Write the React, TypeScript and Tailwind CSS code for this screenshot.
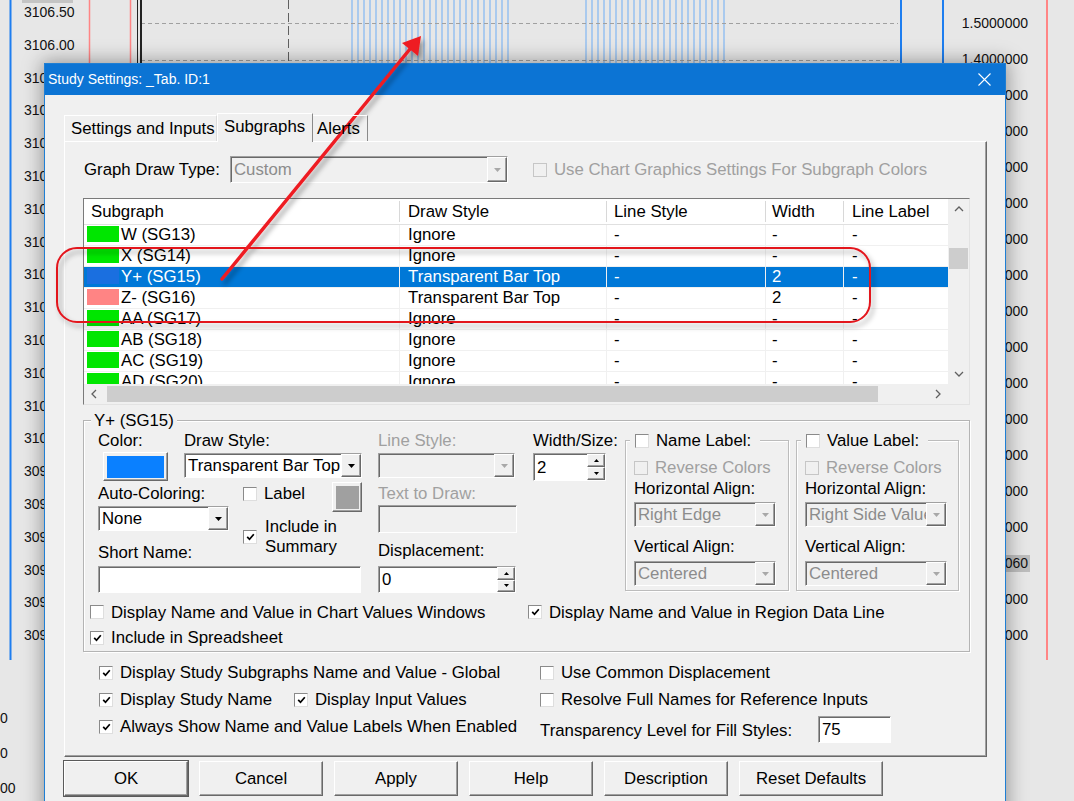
import React from 'react';

type Row = { name: string; swatch: string; style: string; width: string; selected?: boolean };

const ROWS: Row[] = [
  { name: 'W (SG13)', swatch: 'bg-[#00e600]', style: 'Ignore', width: '-' },
  { name: 'X (SG14)', swatch: 'bg-[#00e600]', style: 'Ignore', width: '-' },
  { name: 'Y+ (SG15)', swatch: 'bg-[#1a6fe0]', style: 'Transparent Bar Top', width: '2', selected: true },
  { name: 'Z- (SG16)', swatch: 'bg-[#ff8484]', style: 'Transparent Bar Top', width: '2' },
  { name: 'AA (SG17)', swatch: 'bg-[#00e600]', style: 'Ignore', width: '-' },
  { name: 'AB (SG18)', swatch: 'bg-[#00e600]', style: 'Ignore', width: '-' },
  { name: 'AC (SG19)', swatch: 'bg-[#00e600]', style: 'Ignore', width: '-' },
  { name: 'AD (SG20)', swatch: 'bg-[#00e600]', style: 'Ignore', width: '-' },
];

// classic 3d edges
const raised = 'border border-t-white border-l-white border-r-[#696969] border-b-[#696969] shadow-[inset_-1px_-1px_0_#a0a0a0]';
const sunken = 'border border-t-[#a0a0a0] border-l-[#a0a0a0] border-r-white border-b-white shadow-[inset_1px_1px_0_#696969]';

function Tri({ color = '#000', up = false, w = 7, h = 4 }: { color?: string; up?: boolean; w?: number; h?: number }) {
  return (
    <svg width={w} height={h} viewBox={`0 0 ${w} ${h}`}>
      <polygon points={up ? `0,${h} ${w},${h} ${w / 2},0` : `0,0 ${w},0 ${w / 2},${h}`} fill={color} />
    </svg>
  );
}

function Chevron({ dir }: { dir: 'up' | 'down' | 'left' | 'right' }) {
  const d = {
    up: 'M1 6 L5 2 L9 6',
    down: 'M1 3 L5 7 L9 3',
    left: 'M6 1 L2 5 L6 9',
    right: 'M3 1 L7 5 L3 9',
  }[dir];
  return (
    <svg width="10" height="10" viewBox="0 0 10 10">
      <path d={d} fill="none" stroke="#606060" strokeWidth="1.3" />
    </svg>
  );
}

function Check({ checked = false, disabled = false }: { checked?: boolean; disabled?: boolean }) {
  const box = disabled
    ? 'border-[#c6c6c6] bg-[#f0f0f0]'
    : 'border-t-[#8a8a8a] border-l-[#8a8a8a] border-r-[#dedede] border-b-[#dedede] bg-white';
  return (
    <span className={`flex h-[14px] w-[14px] shrink-0 items-center justify-center border ${box}`}>
      {checked && (
        <svg width="9" height="8" viewBox="0 0 9 8">
          <path d="M1.2 3.8 L3.5 6.3 L7.8 1.2" fill="none" stroke="#000" strokeWidth="1.7" />
        </svg>
      )}
    </span>
  );
}

function CheckLabel({ checked, disabled, children, className = '' }: { checked?: boolean; disabled?: boolean; children: React.ReactNode; className?: string }) {
  return (
    <div className={`flex h-[21px] items-center gap-[7px] whitespace-nowrap ${disabled ? 'text-[#a0a0a0]' : ''} ${className}`}>
      <Check checked={checked} disabled={disabled} />
      <span>{children}</span>
    </div>
  );
}

function Combo({ value, className, disabled }: { value: string; className: string; disabled?: boolean }) {
  return (
    <div className={`flex ${sunken} ${disabled ? 'bg-[#f0f0f0] text-[#8c8c8c]' : 'bg-white text-black'} ${className}`}>
      <span className="flex flex-1 items-center overflow-hidden whitespace-nowrap pl-[3px]">{value}</span>
      <span className={`flex w-[20px] shrink-0 items-center justify-center bg-[#f0f0f0] ${raised}`}>
        <Tri color={disabled ? '#a8a8a8' : '#000'} />
      </span>
    </div>
  );
}

function Spin({ value, className }: { value: string; className: string }) {
  return (
    <div className={`flex bg-white ${sunken} ${className}`}>
      <span className="flex flex-1 items-center pl-[3px]">{value}</span>
      <span className="flex w-[18px] flex-col">
        <span className={`flex flex-1 items-center justify-center bg-[#f0f0f0] ${raised}`}>
          <Tri up w={5} h={3} />
        </span>
        <span className={`flex flex-1 items-center justify-center bg-[#f0f0f0] ${raised}`}>
          <Tri w={5} h={3} />
        </span>
      </span>
    </div>
  );
}

function ChartBackdrop() {
  const left = Array.from({ length: 20 }, (_, i) => ({ y: 12 + i * 32.8, t: (3106.5 - i * 0.5).toFixed(2) }));
  const right = Array.from({ length: 18 }, (_, i) => ({ y: 23 + i * 36, t: i === 15 ? '0.0000060' : (1.5 - i * 0.1).toFixed(7) }));
  const stripes: number[] = [];
  for (let x = 352; x <= 510; x += 6) stripes.push(x);
  for (let x = 586; x <= 726; x += 6) stripes.push(x);
  return (
    <svg className="absolute inset-0" width="1074" height="801" viewBox="0 0 1074 801">
      <rect width="1074" height="801" fill="#e7e7e7" />
      {stripes.map((x) => (
        <line key={x} x1={x} y1="0" x2={x} y2="120" stroke="#aacaee" strokeWidth="2" />
      ))}
      <line x1="141" y1="23.5" x2="898" y2="23.5" stroke="#a0a0a0" strokeDasharray="4 3" />
      <line x1="141" y1="60.5" x2="898" y2="60.5" stroke="#a0a0a0" strokeDasharray="4 3" />
      <line x1="288.5" y1="0" x2="288.5" y2="120" stroke="#606060" strokeDasharray="9 4" />
      <line x1="10.5" y1="0" x2="10.5" y2="660" stroke="#1e7ef0" strokeWidth="2" />
      <line x1="89.5" y1="0" x2="89.5" y2="660" stroke="#ff8585" strokeWidth="1.5" />
      <line x1="130.5" y1="0" x2="130.5" y2="660" stroke="#ff8585" strokeWidth="1.5" />
      <line x1="137.5" y1="0" x2="137.5" y2="660" stroke="#222" strokeWidth="1" />
      <line x1="141" y1="0" x2="141" y2="660" stroke="#222" strokeWidth="2" />
      <line x1="901" y1="0" x2="901" y2="660" stroke="#1e7ef0" strokeWidth="2" />
      <line x1="943" y1="0" x2="943" y2="660" stroke="#1e7ef0" strokeWidth="2" />
      <line x1="1047" y1="0" x2="1047" y2="660" stroke="#ff8585" strokeWidth="2" />
      <rect x="22" y="0" width="51" height="3" fill="#c4c4c4" />
      <rect x="958" y="555" width="72" height="17" fill="#bdbdbd" />
      <g fontFamily="'Liberation Sans', Arial, sans-serif" fontSize="14" fill="#111">
        {left.map((l) => (
          <text key={l.t} x="24" y={l.y + 5}>{l.t}</text>
        ))}
        {right.map((r) => (
          <text key={r.y} x="1028" y={r.y + 5} textAnchor="end">{r.t}</text>
        ))}
        <text x="0" y="723">0</text>
        <text x="0" y="758">0</text>
        <text x="0" y="793">00</text>
      </g>
    </svg>
  );
}

function Annotation() {
  return (
    <svg className="pointer-events-none absolute inset-0" width="1074" height="801" viewBox="0 0 1074 801">
      <defs>
        <filter id="drop" x="-20%" y="-20%" width="140%" height="140%">
          <feDropShadow dx="3" dy="4" stdDeviation="2.5" floodColor="#000" floodOpacity="0.35" />
        </filter>
      </defs>
      <g filter="url(#drop)">
        <rect x="57" y="248" width="813" height="74" rx="20" fill="none" stroke="#e3141c" strokeWidth="2" />
        <line x1="222" y1="279" x2="410" y2="49" stroke="#ee1c24" strokeWidth="3.5" strokeLinecap="round" />
        <polygon points="421,36 418,56 402,43" fill="#ee1c24" />
      </g>
    </svg>
  );
}

function SubgraphTable() {
  return (
    <div className="mt-[15px] flex h-[207px] w-[887px] flex-col border border-t-[#7a7a7a] border-l-[#7a7a7a] border-r-[#e3e3e3] border-b-[#e3e3e3] bg-white">
      <div className="flex min-h-0 flex-1">
        <div className="flex w-[864px] flex-col overflow-hidden">
          <div className="flex h-[26px] shrink-0 items-center border-b border-[#e0e0e0] bg-white">
            <div className="w-[316px] shrink-0 border-r border-[#d8d8d8] pl-[7px]">Subgraph</div>
            <div className="w-[207px] shrink-0 border-r border-[#d8d8d8] pl-[8px]">Draw Style</div>
            <div className="w-[159px] shrink-0 border-r border-[#d8d8d8] pl-[7px]">Line Style</div>
            <div className="w-[78px] shrink-0 border-r border-[#d8d8d8] pl-[6px]">Width</div>
            <div className="flex-1 whitespace-nowrap pl-[8px]">Line Label</div>
          </div>
          {ROWS.map((r) => (
            <div
              key={r.name}
              className={`flex h-[21px] shrink-0 border-b border-[#f0f0f0] leading-[20px] ${r.selected ? 'bg-[#0078d7] text-white' : 'bg-white'}`}
            >
              <div className="flex w-[316px] shrink-0 border-r border-[#f0f0f0]">
                <span className={`ml-[3px] mt-[1px] h-[16px] w-[32px] ${r.swatch}`} />
                <span className="ml-[2px]">{r.name}</span>
              </div>
              <div className="w-[207px] shrink-0 border-r border-[#f0f0f0] pl-[8px]">{r.style}</div>
              <div className="w-[159px] shrink-0 border-r border-[#f0f0f0] pl-[7px]">-</div>
              <div className="w-[78px] shrink-0 border-r border-[#f0f0f0] pl-[6px]">{r.width}</div>
              <div className="flex-1 pl-[8px]">-</div>
            </div>
          ))}
        </div>
        <div className="flex w-[21px] shrink-0 flex-col bg-[#f0f0f0]">
          <div className="flex h-[21px] items-center justify-center"><Chevron dir="up" /></div>
          <div className="mx-[1px] mt-[28px] h-[21px] bg-[#cdcdcd]" />
          <div className="flex-1" />
          <div className="flex h-[21px] items-center justify-center"><Chevron dir="down" /></div>
        </div>
      </div>
      <div className="flex h-[20px] shrink-0 bg-[#f0f0f0]">
        <div className="flex w-[21px] items-center justify-center"><Chevron dir="left" /></div>
        <div className="my-[2px] ml-[2px] w-[771px] bg-[#cdcdcd]" />
        <div className="flex-1" />
        <div className="flex w-[21px] items-center justify-center"><Chevron dir="right" /></div>
        <div className="w-[21px]" />
      </div>
    </div>
  );
}

function LabelBox({ title, hAlign, width }: { title: string; hAlign: string; width: string }) {
  return (
    <div className={`relative mt-[10px] h-[151px] border border-[#bcbcbc] px-[8px] shadow-[inset_1px_1px_0_#fff,1px_1px_0_#fff] ${width}`}>
      <div className="absolute -top-[11px] left-[4px] flex h-[21px] items-center gap-[7px] bg-[#f0f0f0] pl-[5px] pr-[9px]">
        <Check />
        <span>{title}</span>
      </div>
      <CheckLabel disabled className="mt-[16px]">Reverse Colors</CheckLabel>
      <div className="h-[21px]">Horizontal Align:</div>
      <Combo disabled value={hAlign} className="mt-[3px] h-[25px] w-[142px]" />
      <div className="mt-[9px] h-[21px]">Vertical Align:</div>
      <Combo disabled value="Centered" className="mt-[4px] h-[25px] w-[142px]" />
    </div>
  );
}

function SubgraphGroup() {
  return (
    <div className="relative mt-[15px] h-[232px] w-[887px] border border-[#b4b4b4] pl-[6px] pt-[9px] shadow-[inset_1px_1px_0_#fff,1px_1px_0_#fff]">
      <span className="absolute -top-[11px] left-[7px] bg-[#f0f0f0] px-[3px]">Y+ (SG15)</span>
      <div className="ml-[8px] flex items-start">
        {/* color / draw style / auto coloring / short name */}
        <div className="w-[264px]">
          <div className="flex">
            <div className="w-[86px]">
              <div className="h-[21px]">Color:</div>
              <div className={`ml-[5px] mt-[1px] flex h-[29px] w-[65px] items-center justify-center bg-[#f0f0f0] ${raised}`}>
                <div className="h-[22px] w-[57px] bg-[#0a80ff]" />
              </div>
            </div>
            <div className="w-[178px]">
              <div className="h-[21px]">Draw Style:</div>
              <Combo value="Transparent Bar Top" className="mt-[2px] h-[25px] w-[178px]" />
            </div>
          </div>
          <div className="mt-[2px] flex items-start">
            <div className="w-[146px]">
              <div className="h-[21px]">Auto-Coloring:</div>
              <Combo value="None" className="mt-[2px] h-[25px] w-[131px]" />
              <div className="mt-[11px] h-[21px]">Short Name:</div>
            </div>
            <div className="flex w-[119px]">
              <div className="w-[89px]">
                <CheckLabel>Label</CheckLabel>
                <div className="mt-[13px] flex items-center gap-[8px] whitespace-nowrap leading-[20px]">
                  <Check checked />
                  <span>Include in<br />Summary</span>
                </div>
              </div>
              <div className={`-mt-[1px] flex h-[30px] w-[30px] items-center justify-center bg-[#f0f0f0] ${raised}`}>
                <div className="h-[23px] w-[23px] bg-[#a0a0a0]" />
              </div>
            </div>
          </div>
          <div className={`mt-[3px] h-[27px] w-[263px] bg-white ${sunken}`} />
        </div>

        {/* line style / text / displacement */}
        <div className="ml-[16px] w-[139px]">
          <div className="h-[21px] text-[#a0a0a0]">Line Style:</div>
          <Combo disabled value="" className="mt-[2px] h-[25px] w-[137px]" />
          <div className="mt-[5px] h-[21px] text-[#a0a0a0]">Text to Draw:</div>
          <div className={`mt-[1px] h-[28px] w-[139px] bg-[#f0f0f0] ${sunken}`} />
          <div className="mt-[7px] h-[21px]">Displacement:</div>
          <Spin value="0" className="mt-[5px] h-[27px] w-[138px]" />
        </div>

        <div className="ml-[16px] w-[92px]">
          <div className="h-[21px] whitespace-nowrap">Width/Size:</div>
          <Spin value="2" className="mt-[2px] h-[28px] w-[73px]" />
        </div>

        <LabelBox title="Name Label:" hAlign="Right Edge" width="w-[164px]" />
        <div className="ml-[7px]">
          <LabelBox title="Value Label:" hAlign="Right Side Value" width="w-[163px]" />
        </div>
      </div>

      <div className="mt-[9px] flex h-[20px] items-center">
        <div className="w-[438px]">
          <CheckLabel>Display Name and Value in Chart Values Windows</CheckLabel>
        </div>
        <CheckLabel checked>Display Name and Value in Region Data Line</CheckLabel>
      </div>
      <CheckLabel checked className="mt-[5px] h-[20px]">Include in Spreadsheet</CheckLabel>
    </div>
  );
}

function StudyDialog() {
  const buttons = ['OK', 'Cancel', 'Apply', 'Help', 'Description'];
  return (
    <div className="absolute left-[44px] top-[63px] flex h-[760px] w-[962px] flex-col border border-[#1f7fd4] bg-[#f0f0f0] text-[16.8px] leading-[21px] shadow-[0_0_18px_2px_rgba(0,0,0,0.35)]">
      <div className="flex h-[31px] shrink-0 items-center justify-between bg-[#0c74d4] pl-[3px] pr-[14px] text-[14px] text-white">
        <span>Study Settings: _Tab. ID:1</span>
        <svg width="13" height="13" viewBox="0 0 13 13">
          <path d="M0.5 0.5 L12.5 12.5 M12.5 0.5 L0.5 12.5" stroke="#fff" strokeWidth="1.1" />
        </svg>
      </div>

      <div className="flex flex-col pl-[19px] pt-[18px]">
        <div className="relative z-10 flex h-[28px] items-end whitespace-nowrap">
          <div className="h-[26px] w-[153px] border-l border-t border-r border-t-white border-l-white border-r-[#dcdcdc] pl-[6px] leading-[25px]">
            Settings and Inputs
          </div>
          <div className="relative top-[1px] h-[29px] w-[96px] border-l border-t border-r border-t-white border-l-white border-r-[#8a8a8a] bg-[#f0f0f0] pl-[6px] pt-[2px]">
            Subgraphs
          </div>
          <div className="h-[26px] w-[55px] border-t border-r border-t-white border-r-[#8a8a8a] pl-[4px] leading-[25px]">
            Alerts
          </div>
        </div>

        <div className="flex h-[616px] w-[923px] flex-col border border-t-white border-l-white border-r-[#696969] border-b-[#696969] pl-[18px] shadow-[inset_-1px_-1px_0_#a0a0a0]">
          <div className="mt-[14px] flex h-[27px] items-center">
            <span className="w-[147px] pl-[1px]">Graph Draw Type:</span>
            <Combo disabled value="Custom" className="h-[27px] w-[278px]" />
            <CheckLabel disabled className="ml-[25px]">Use Chart Graphics Settings For Subgraph Colors</CheckLabel>
          </div>

          <SubgraphTable />
          <SubgraphGroup />

          <div className="ml-[16px] mt-[10px] flex">
            <div className="w-[441px]">
              <CheckLabel checked>Display Study Subgraphs Name and Value - Global</CheckLabel>
              <div className="mt-[6px] flex">
                <div className="w-[195px]">
                  <CheckLabel checked>Display Study Name</CheckLabel>
                </div>
                <CheckLabel checked>Display Input Values</CheckLabel>
              </div>
              <CheckLabel checked className="mt-[6px]">Always Show Name and Value Labels When Enabled</CheckLabel>
            </div>
            <div>
              <CheckLabel>Use Common Displacement</CheckLabel>
              <CheckLabel className="mt-[6px]">Resolve Full Names for Reference Inputs</CheckLabel>
              <div className="mt-[6px] flex items-center">
                <span className="w-[278px] pt-[2px]">Transparency Level for Fill Styles:</span>
                <div className={`flex h-[27px] w-[73px] items-center bg-white pl-[3px] ${sunken}`}>75</div>
              </div>
            </div>
          </div>
        </div>

        <div className="mt-[4px] flex gap-[11px]">
          {buttons.map((b) => (
            <div
              key={b}
              className={`flex h-[35px] w-[124px] items-center justify-center bg-[#f0f0f0] ${raised} ${b === 'OK' ? 'outline outline-1 outline-[#5a5a5a]' : ''}`}
            >
              {b}
            </div>
          ))}
          <div className={`flex h-[35px] w-[144px] items-center justify-center bg-[#f0f0f0] ${raised}`}>Reset Defaults</div>
        </div>
      </div>
    </div>
  );
}

export default function App() {
  return (
    <div className="relative h-[801px] w-[1074px] overflow-hidden bg-[#e7e7e7] font-['Liberation_Sans',Arial,sans-serif] text-black">
      <ChartBackdrop />
      <StudyDialog />
      <Annotation />
    </div>
  );
}
